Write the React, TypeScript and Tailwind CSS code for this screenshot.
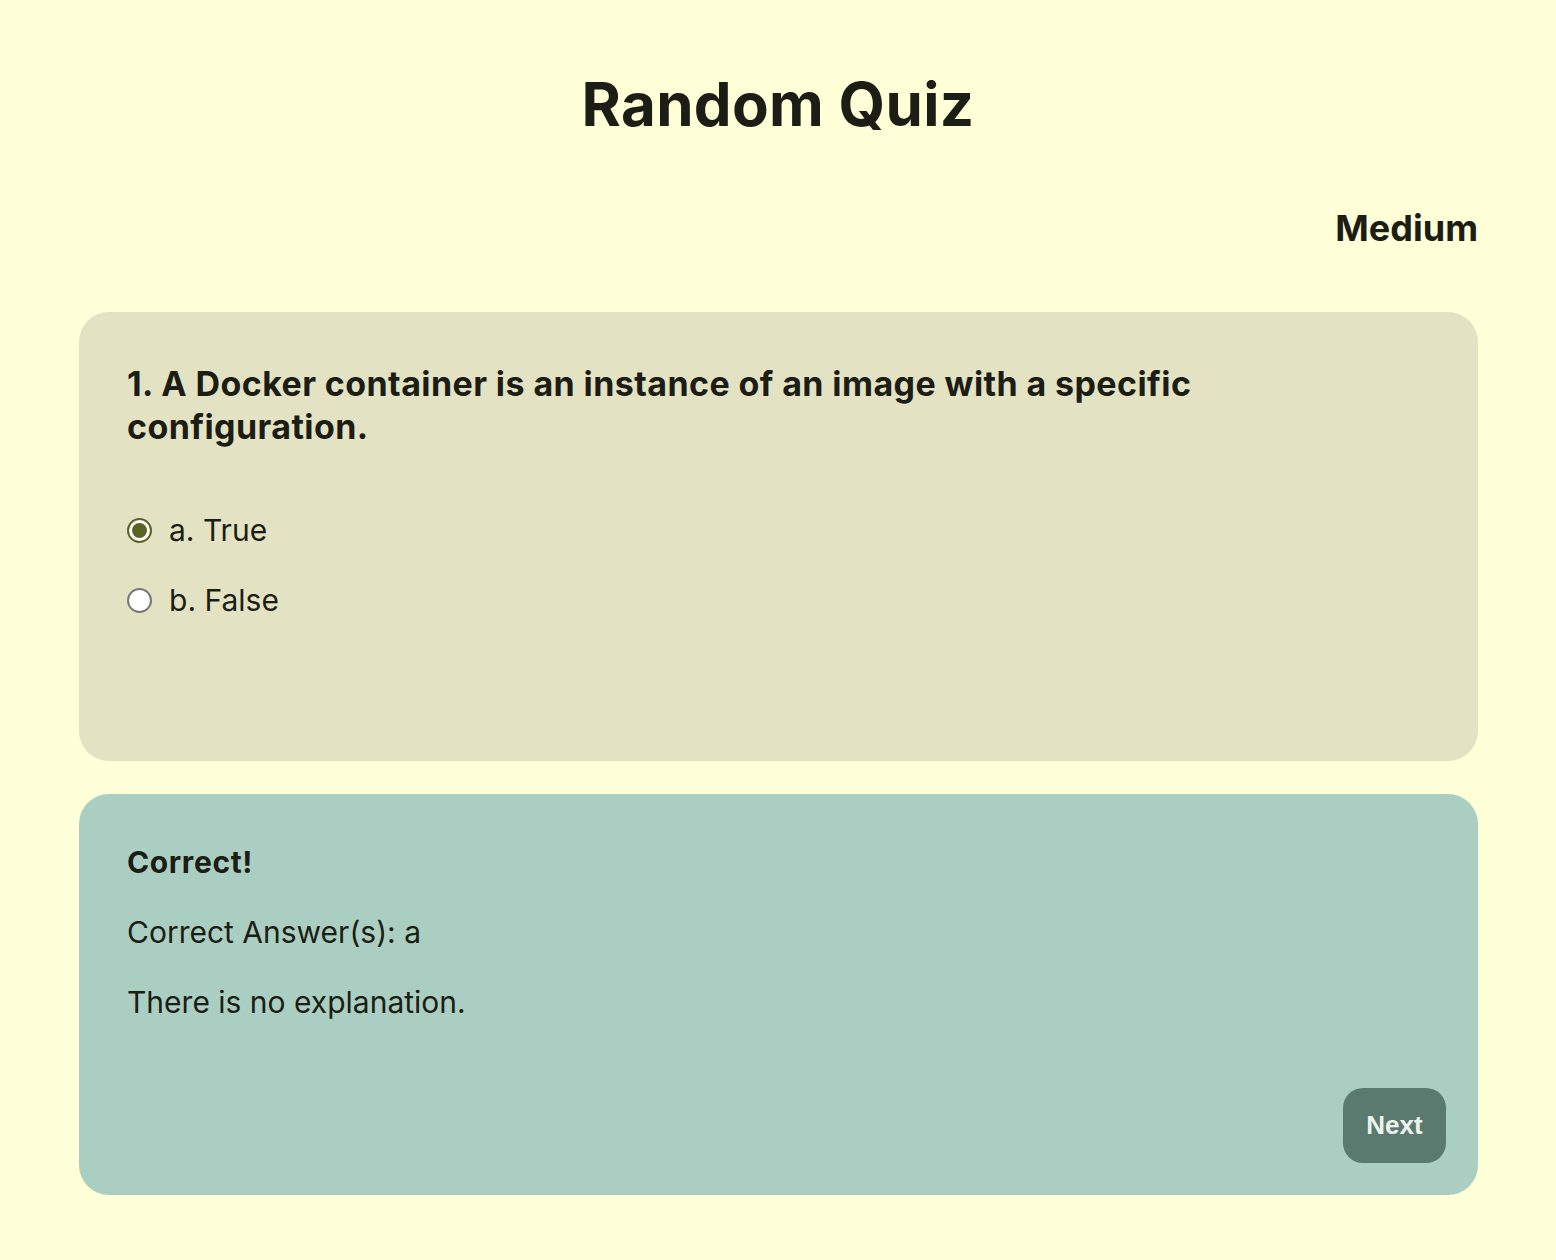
import { useState } from "react";

const options = [
  { key: "a", label: "True" },
  { key: "b", label: "False" },
];

export default function App() {
  const [picked, setPicked] = useState("a");

  return (
    <div className="min-h-[1260px] bg-[#ffffd8] font-['Inter','Noto_Sans',sans-serif] text-[#1c1d14]">
      <div className="mx-auto w-[1400px] pt-[62px]">
        <h1 className="text-center text-[60px] font-bold leading-[84px] tracking-[0.005em]">Random Quiz</h1>

        <div className="mt-[54px] flex justify-end">
          <span className="text-[36px] font-bold leading-[56px]">Medium</span>
        </div>

        <div className="mt-[56px] ml-px h-[449px] rounded-[30px] bg-[#e3e3c4] pl-[48px] pr-[48px] pt-[50px]">
          <h2 className="max-w-[1120px] text-[34px] font-bold leading-[43px] tracking-[0.012em]">
            1. A Docker container is an instance of an image with a specific configuration.
          </h2>

          <div className="mt-[59px] flex flex-col gap-[24px]">
            {options.map((o) => (
              <label key={o.key} className="flex items-center gap-[17px] text-[30px] leading-[46px]">
                <span
                  className={
                    picked === o.key
                      ? "flex h-[25px] w-[25px] items-center justify-center rounded-full border-[2px] border-[#5b6322] bg-white"
                      : "flex h-[25px] w-[25px] items-center justify-center rounded-full border-[2px] border-[#77777a] bg-white"
                  }
                  onClick={() => setPicked(o.key)}
                >
                  {picked === o.key && <span className="h-[15px] w-[15px] rounded-full bg-[#5b6322]" />}
                </span>
                <span>
                  {o.key}. {o.label}
                </span>
              </label>
            ))}
          </div>
        </div>

        <div className="mt-[33px] ml-px flex h-[401px] flex-col rounded-[30px] bg-[#aacfc2] pl-[48px] pr-[32px] pt-[45px] pb-[32px]">
          <p className="text-[30px] font-bold leading-[46px] tracking-[0.02em]">Correct!</p>
          <p className="mt-[24px] text-[30px] leading-[46px]">Correct Answer(s): a</p>
          <p className="mt-[24px] text-[30px] leading-[46px]">There is no explanation.</p>
          <div className="mt-auto flex justify-end">
            <button className="h-[75px] w-[103px] rounded-[20px] bg-[#5b7a6f] font-['Liberation_Sans',Arial,sans-serif] text-[26px] font-bold text-[#eef3ee]">
              Next
            </button>
          </div>
        </div>
      </div>
    </div>
  );
}
